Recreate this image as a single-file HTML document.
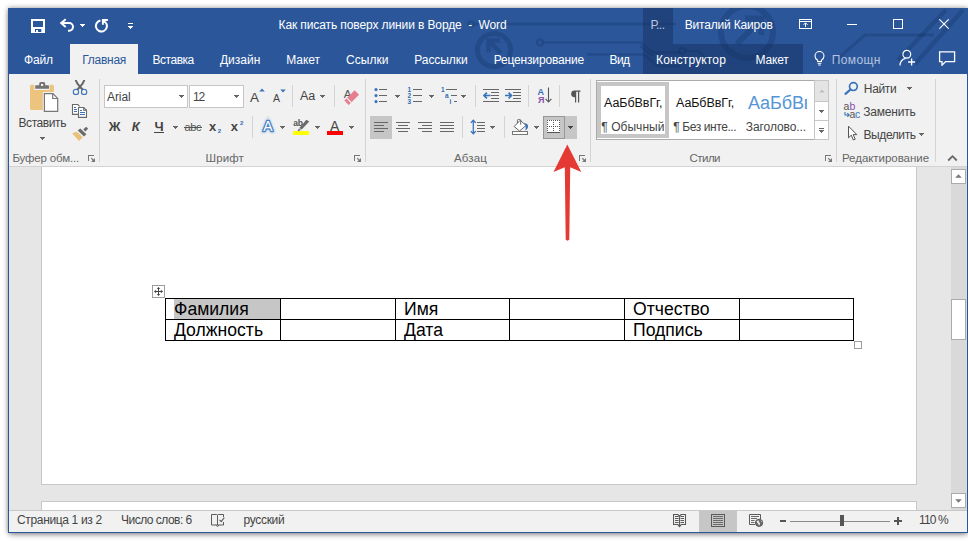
<!DOCTYPE html>
<html><head><meta charset="utf-8"><title>Word</title>
<style>
*{box-sizing:border-box;margin:0;padding:0}
html,body{width:968px;height:541px;overflow:hidden;background:#fff;font-family:"Liberation Sans",sans-serif}
.a{position:absolute;display:block}
.t{position:absolute;white-space:pre;line-height:1;display:block}
</style></head><body>
<div class="a" style="left:8px;top:8px;width:960px;height:525px;box-shadow:0 0 5px rgba(0,0,0,.45),0 4px 6px -2px rgba(0,0,0,.25);background:#2b579a"></div>
<div class="a" style="left:8px;top:8px;width:960px;height:66px;background:#2b579a;"></div>
<svg class="a" style="left:8px;top:8px;" width="960" height="66" viewBox="0 0 960 66"><g fill="none" stroke="#0a2350" stroke-opacity=".23" stroke-width="2.600">
<circle cx="463" cy="16" r="2.500"/><path d="M466 16H668"/>
<circle cx="532" cy="34.500" r="3"/><path d="M535.500 34.500H633L645 44.500H672"/>
<path d="M579 46.500H636L650 58H672"/>
<circle cx="486" cy="42" r="16.500" stroke-width="5"/>
<path d="M493 45L481 33M480.500 44V32.500H492" stroke-width="4.500"/>
<circle cx="739" cy="24" r="26" stroke-width="6"/>
<path d="M729 36L752 12M737 10.500H753.500V27" stroke-width="6"/>
<circle cx="674" cy="43" r="2.800"/><path d="M677 43H690L700 52H716"/>
<path d="M632 38L645 48"/>
<path d="M826 54L857 27H926" stroke-width="3"/><path d="M938 2L890 52" stroke-width="4.500"/><path d="M955 2L907 56" stroke-width="4.500"/>
</g></svg>
<div class="a" style="left:643px;top:8px;width:30px;height:36px;background:rgba(20,45,90,.45);"></div>
<div class="a" style="left:643px;top:44px;width:160px;height:30px;background:rgba(20,45,90,.45);"></div>
<div class="a" style="left:9px;top:74px;width:958px;height:92px;background:#f1f1f1;"></div>
<div class="a" style="left:9px;top:166px;width:958px;height:1px;background:#d2d2d2;"></div>
<div class="a" style="left:70px;top:44px;width:68px;height:30px;background:#f1f1f1;"></div>
<span class="t" style="left:278.50px;top:18px;line-height:14px;font-size:12px;color:#fff;letter-spacing:-0.105px;">Как писать поверх линии в Ворде  -  Word</span>
<span class="t" style="left:650.60px;top:18px;line-height:14px;font-size:12px;color:#b9c6de;letter-spacing:-0.438px;">Р...</span>
<span class="t" style="left:684.70px;top:18px;line-height:14px;font-size:12px;color:#fff;letter-spacing:-0.184px;">Виталий Каиров</span>
<span class="t" style="left:24.00px;top:53px;line-height:14px;font-size:12px;color:#fff;letter-spacing:-0.204px;">Файл</span>
<span class="t" style="left:152.60px;top:53px;line-height:14px;font-size:12px;color:#fff;letter-spacing:-0.487px;">Вставка</span>
<span class="t" style="left:220.00px;top:53px;line-height:14px;font-size:12px;color:#fff;letter-spacing:-0.007px;">Дизайн</span>
<span class="t" style="left:286.20px;top:53px;line-height:14px;font-size:12px;color:#fff;letter-spacing:-0.034px;">Макет</span>
<span class="t" style="left:346.00px;top:53px;line-height:14px;font-size:12px;color:#fff;letter-spacing:0.058px;">Ссылки</span>
<span class="t" style="left:414.20px;top:53px;line-height:14px;font-size:12px;color:#fff;letter-spacing:-0.045px;">Рассылки</span>
<span class="t" style="left:493.70px;top:53px;line-height:14px;font-size:12px;color:#fff;letter-spacing:-0.169px;">Рецензирование</span>
<span class="t" style="left:609.60px;top:53px;line-height:14px;font-size:12px;color:#fff;letter-spacing:-0.640px;">Вид</span>
<span class="t" style="left:656.00px;top:53px;line-height:14px;font-size:12px;color:#fff;letter-spacing:0.143px;">Конструктор</span>
<span class="t" style="left:755.60px;top:53px;line-height:14px;font-size:12px;color:#fff;letter-spacing:-0.174px;">Макет</span>
<span class="t" style="left:82.30px;top:53px;line-height:14px;font-size:12px;color:#2b579a;letter-spacing:-0.284px;">Главная</span>
<span class="t" style="left:831.70px;top:53px;line-height:14px;font-size:12px;color:#b4c3df;letter-spacing:0.394px;">Помощн</span>
<div class="a" style="left:9px;top:167px;width:958px;height:343px;background:#e6e6e6;"></div>
<div class="a" style="left:41px;top:167px;width:876px;height:317.5px;background:#fff;border:1px solid #c8c8c8;border-top:none"></div>
<div class="a" style="left:41px;top:501px;width:876px;height:10px;background:#fff;border:1px solid #c8c8c8;border-bottom:none"></div>
<div class="a" style="left:9px;top:510px;width:958px;height:22px;background:#f1f1f1;"></div>
<div class="a" style="left:9px;top:510px;width:958px;height:1px;background:#c8c8c8;"></div>
<svg class="a" style="left:29px;top:80px;" width="31" height="33" viewBox="0 0 31 33"><rect x="1" y="4.650" width="23.900" height="25.250" rx="1.600" fill="#ecc47e"/>
<rect x="5.300" y="4" width="15.300" height="6" fill="#f1f1f1"/>
<path d="M6.200 8.800V6.100Q6.200 5.200 7.100 5.200H10.200V3.600Q10.200 2.100 11.700 2.100H14.700Q16.200 2.100 16.200 3.600V5.200H19.050Q19.950 5.200 19.950 6.100V8.800Z" fill="#737373"/>
<rect x="12" y="3.850" width="2.200" height="2.150" fill="#f1f1f1"/>
<rect x="13.800" y="12" width="12" height="19" fill="#f1f1f1"/>
<path d="M15.400 13.600H23.900L28.700 18.400V31.300H15.400Z" fill="#fff" stroke="#777" stroke-width="1.200"/>
<path d="M23.700 13.600V18.500H28.700" fill="none" stroke="#777" stroke-width="1.200"/></svg>
<span class="t" style="left:18.50px;top:116px;line-height:14px;font-size:12px;color:#444;letter-spacing:-0.422px;">Вставить</span>
<svg class="a" style="left:40px;top:137px;shape-rendering:crispEdges" width="5" height="3" viewBox="0 0 5 3"><path d="M0 0h5v1h-5zM1 1h3v1h-3zM2 2h1v1h-1z" fill="#666"/></svg>
<svg class="a" style="left:72px;top:80px;" width="17" height="16" viewBox="0 0 17 16"><path d="M3.900 0.500Q5 4 8 6.800L10.300 9.300M12.100 0.500Q11 4 8 6.800L5.700 9.300" fill="none" stroke="#666" stroke-width="2" stroke-linecap="round"/>
<circle cx="3.960" cy="11.900" r="2.650" fill="none" stroke="#3b73b9" stroke-width="1.100"/><circle cx="12.100" cy="11.900" r="2.650" fill="none" stroke="#3b73b9" stroke-width="1.100"/></svg>
<svg class="a" style="left:71px;top:103px;" width="18" height="16" viewBox="0 0 18 16"><path d="M8.600 3.300L6.800 1.500H1.500V11.400H7" fill="#fff" stroke="#6a6a6a" stroke-width="1.100"/>
<path d="M3 4h2v1h-2zM3 6h3v1h-3zM3 8h3v1h-3z" fill="#3b73b9"/>
<path d="M7.500 4.500H12.700L15.500 7.300V14.400H7.500Z" fill="#fff" stroke="#6a6a6a" stroke-width="1.100"/>
<path d="M12.700 4.500V7.300H15.500" fill="none" stroke="#6a6a6a" stroke-width="1.100"/>
<path d="M9 7h2v1h-2zM9 9h5v1h-5zM9 11h5v1h-5z" fill="#3b73b9"/></svg>
<svg class="a" style="left:72px;top:126px;" width="17" height="16" viewBox="0 0 17 16"><path d="M0.070 7.200L4.750 5.800L10.850 11.250L7 14.900Z" fill="#eac17a"/>
<path d="M5.700 4.500L8.300 2.500L14.400 8.200L12 10.400Z" fill="#6a6a6a"/>
<path d="M11.250 3.500L14.100 0.700L16.100 2.500L13.500 5.600Z" fill="#6a6a6a"/></svg>
<span class="t" style="left:12.50px;top:152px;line-height:12px;font-size:11.5px;color:#666;letter-spacing:-0.174px;">Буфер обм...</span>
<svg class="a" style="left:88px;top:155px;" width="8" height="8" viewBox="0 0 8 8"><path d="M0 0h6v1h-6zM0 0h1v6h-1z" fill="#777"/><path d="M7 3V7H3Z" fill="#777"/><path d="M3.200 3.200L5.500 5.500" stroke="#777" stroke-width="1.100"/></svg>
<div class="a" style="left:99px;top:79px;width:1px;height:83px;background:#d4d4d4;"></div>
<div class="a" style="left:104px;top:85px;width:84px;height:23px;background:#fff;border:1px solid #c6c6c6"></div>
<div class="a" style="left:189px;top:85px;width:55px;height:23px;background:#fff;border:1px solid #c6c6c6"></div>
<span class="t" style="left:107.00px;top:90px;line-height:14px;font-size:12px;color:#444;letter-spacing:-0.083px;">Arial</span>
<span class="t" style="left:193.00px;top:90px;line-height:14px;font-size:12px;color:#444;letter-spacing:-1.180px;">12</span>
<svg class="a" style="left:179px;top:95px;shape-rendering:crispEdges" width="5" height="3" viewBox="0 0 5 3"><path d="M0 0h5v1h-5zM1 1h3v1h-3zM2 2h1v1h-1z" fill="#666"/></svg>
<svg class="a" style="left:234px;top:95px;shape-rendering:crispEdges" width="5" height="3" viewBox="0 0 5 3"><path d="M0 0h5v1h-5zM1 1h3v1h-3zM2 2h1v1h-1z" fill="#666"/></svg>
<span class="t" style="left:250.00px;top:90px;line-height:15px;font-size:13.5px;color:#444;letter-spacing:0.384px;">A</span>
<svg class="a" style="left:259px;top:88px;" width="6" height="4" viewBox="0 0 6 4"><path d="M0.200 3.600L3 0.400L5.800 3.600Z" fill="#3b73b9"/></svg>
<span class="t" style="left:273.00px;top:92px;line-height:12px;font-size:10.5px;color:#444;letter-spacing:0.784px;">A</span>
<svg class="a" style="left:280px;top:88.5px;" width="6" height="4" viewBox="0 0 6 4"><path d="M0.200 0.400L3 3.600L5.800 0.400Z" fill="#3b73b9"/></svg>
<div class="a" style="left:292px;top:85px;width:1px;height:22px;background:#d4d4d4;"></div>
<span class="t" style="left:300.00px;top:89px;line-height:14px;font-size:12.5px;color:#444;letter-spacing:-0.148px;">Aa</span>
<svg class="a" style="left:320px;top:95px;shape-rendering:crispEdges" width="5" height="3" viewBox="0 0 5 3"><path d="M0 0h5v1h-5zM1 1h3v1h-3zM2 2h1v1h-1z" fill="#666"/></svg>
<div class="a" style="left:334px;top:85px;width:1px;height:22px;background:#d4d4d4;"></div>
<span class="t" style="left:343.70px;top:88px;line-height:12px;font-size:11.5px;color:#555;letter-spacing:-1.172px;">A</span>
<svg class="a" style="left:343px;top:88px;" width="17" height="17" viewBox="0 0 17 17"><g transform="translate(8.900,9.400) rotate(-45)"><rect x="-7.600" y="-3.100" width="14.600" height="6.200" fill="#e57e8f"/><rect x="-4.700" y="-3.400" width="1.200" height="6.800" fill="#f1f1f1"/></g></svg>
<div class="a" style="left:365px;top:79px;width:1px;height:83px;background:#d4d4d4;"></div>
<span class="t" style="left:108.70px;top:119px;line-height:15px;font-size:13px;color:#444;letter-spacing:1.250px;font-weight:700;">Ж</span>
<span class="t" style="left:131.70px;top:119px;line-height:15px;font-size:13px;color:#444;letter-spacing:0.300px;font-weight:700;font-style:italic;">К</span>
<span class="t" style="left:154.60px;top:119px;line-height:15px;font-size:13px;color:#444;letter-spacing:-0.741px;font-weight:700;">Ч</span>
<div class="a" style="left:154px;top:132px;width:10px;height:1px;background:#444;"></div>
<svg class="a" style="left:173px;top:126px;shape-rendering:crispEdges" width="5" height="3" viewBox="0 0 5 3"><path d="M0 0h5v1h-5zM1 1h3v1h-3zM2 2h1v1h-1z" fill="#666"/></svg>
<span class="t" style="left:184.50px;top:121px;line-height:12px;font-size:11px;color:#555;letter-spacing:-0.417px;">abc</span>
<div class="a" style="left:184px;top:126.5px;width:17.5px;height:1px;background:#555;"></div>
<span class="t" style="left:209.00px;top:119px;line-height:15px;font-size:13px;color:#444;letter-spacing:0.166px;font-weight:700;">x</span>
<span class="t" style="left:217.80px;top:128px;line-height:6px;font-size:6px;color:#2f6bb3;letter-spacing:0.056px;font-weight:700;">2</span>
<span class="t" style="left:230.80px;top:119px;line-height:15px;font-size:13px;color:#444;letter-spacing:0.266px;font-weight:700;">x</span>
<span class="t" style="left:240.00px;top:120px;line-height:6px;font-size:6px;color:#2f6bb3;letter-spacing:0.056px;font-weight:700;">2</span>
<div class="a" style="left:252px;top:116px;width:1px;height:22px;background:#d4d4d4;"></div>
<svg class="a" style="left:257px;top:115px;" width="22" height="22" viewBox="0 0 22 22"><defs><filter id="gl" x="-30%" y="-30%" width="160%" height="160%"><feGaussianBlur stdDeviation="0.900"/></filter></defs><text x="10.900" y="16.200" text-anchor="middle" font-family="Liberation Sans" font-size="14" fill="none" stroke="#6fa3dc" stroke-width="3.600" filter="url(#gl)" opacity=".45">A</text><text x="10.900" y="16.200" text-anchor="middle" font-family="Liberation Sans" font-size="14" fill="#fff" stroke="#4580c6" stroke-width="2.600" stroke-linejoin="round" paint-order="stroke">A</text></svg>
<svg class="a" style="left:280px;top:126px;shape-rendering:crispEdges" width="5" height="3" viewBox="0 0 5 3"><path d="M0 0h5v1h-5zM1 1h3v1h-3zM2 2h1v1h-1z" fill="#666"/></svg>
<span class="t" style="left:293.20px;top:118px;line-height:10px;font-size:8.5px;color:#555;letter-spacing:-0.261px;font-weight:700;">ab</span>
<svg class="a" style="left:296px;top:119px;" width="14" height="13" viewBox="0 0 14 13"><path d="M10.300 0.700L13.300 2.600L5.700 10.600L3.300 9.100Z" fill="#6a6a6a"/><path d="M3 9.600L5 10.900L1.300 12.500Z" fill="#6a6a6a"/></svg>
<div class="a" style="left:293px;top:131px;width:16px;height:4px;background:#ffff00;"></div>
<svg class="a" style="left:315px;top:126px;shape-rendering:crispEdges" width="5" height="3" viewBox="0 0 5 3"><path d="M0 0h5v1h-5zM1 1h3v1h-3zM2 2h1v1h-1z" fill="#666"/></svg>
<span class="t" style="left:330.00px;top:118px;line-height:16px;font-size:14px;color:#4a4a4a;letter-spacing:0.856px;">A</span>
<div class="a" style="left:327px;top:131px;width:16px;height:4px;background:#ff0000;"></div>
<svg class="a" style="left:349px;top:126px;shape-rendering:crispEdges" width="5" height="3" viewBox="0 0 5 3"><path d="M0 0h5v1h-5zM1 1h3v1h-3zM2 2h1v1h-1z" fill="#666"/></svg>
<span class="t" style="left:205.50px;top:152px;line-height:12px;font-size:11.5px;color:#666;letter-spacing:0.131px;">Шрифт</span>
<svg class="a" style="left:354px;top:155px;" width="8" height="8" viewBox="0 0 8 8"><path d="M0 0h6v1h-6zM0 0h1v6h-1z" fill="#777"/><path d="M7 3V7H3Z" fill="#777"/><path d="M3.200 3.200L5.500 5.500" stroke="#777" stroke-width="1.100"/></svg>
<svg class="a" style="left:373.5px;top:88px;" width="4" height="3.5" viewBox="0 0 4 3.5"><circle cx="2" cy="1.600" r="1.550" fill="#3b73b9"/></svg>
<div class="a" style="left:379px;top:89px;width:8px;height:1px;background:#666;"></div>
<svg class="a" style="left:373.5px;top:94px;" width="4" height="3.5" viewBox="0 0 4 3.5"><circle cx="2" cy="1.600" r="1.550" fill="#3b73b9"/></svg>
<div class="a" style="left:379px;top:95px;width:8px;height:1px;background:#666;"></div>
<svg class="a" style="left:373.5px;top:100px;" width="4" height="3.5" viewBox="0 0 4 3.5"><circle cx="2" cy="1.600" r="1.550" fill="#3b73b9"/></svg>
<div class="a" style="left:379px;top:101px;width:8px;height:1px;background:#666;"></div>
<svg class="a" style="left:395px;top:95px;shape-rendering:crispEdges" width="5" height="3" viewBox="0 0 5 3"><path d="M0 0h5v1h-5zM1 1h3v1h-3zM2 2h1v1h-1z" fill="#666"/></svg>
<span class="t" style="left:407.60px;top:86px;line-height:7px;font-size:6.5px;color:#2f6bb3;letter-spacing:0.175px;font-weight:700;">1</span>
<div class="a" style="left:413px;top:89px;width:9px;height:1px;background:#666;"></div>
<span class="t" style="left:407.60px;top:92px;line-height:7px;font-size:6.5px;color:#2f6bb3;letter-spacing:0.175px;font-weight:700;">2</span>
<div class="a" style="left:413px;top:95px;width:9px;height:1px;background:#666;"></div>
<span class="t" style="left:407.60px;top:98px;line-height:7px;font-size:6.5px;color:#2f6bb3;letter-spacing:0.175px;font-weight:700;">3</span>
<div class="a" style="left:413px;top:101px;width:9px;height:1px;background:#666;"></div>
<svg class="a" style="left:429px;top:95px;shape-rendering:crispEdges" width="5" height="3" viewBox="0 0 5 3"><path d="M0 0h5v1h-5zM1 1h3v1h-3zM2 2h1v1h-1z" fill="#666"/></svg>
<span class="t" style="left:441.00px;top:86px;line-height:7px;font-size:6.5px;color:#2f6bb3;letter-spacing:-0.125px;font-weight:700;">1</span>
<div class="a" style="left:446px;top:89px;width:11px;height:1px;background:#666;"></div>
<span class="t" style="left:445.00px;top:92px;line-height:7px;font-size:6.5px;color:#2f6bb3;letter-spacing:-0.625px;font-weight:700;">a</span>
<div class="a" style="left:451px;top:95px;width:6px;height:1px;background:#666;"></div>
<span class="t" style="left:449.50px;top:98px;line-height:7px;font-size:6.5px;color:#2f6bb3;letter-spacing:0.188px;font-weight:700;">i</span>
<div class="a" style="left:454px;top:101px;width:3px;height:1px;background:#666;"></div>
<svg class="a" style="left:461px;top:95px;shape-rendering:crispEdges" width="5" height="3" viewBox="0 0 5 3"><path d="M0 0h5v1h-5zM1 1h3v1h-3zM2 2h1v1h-1z" fill="#666"/></svg>
<div class="a" style="left:475px;top:85px;width:1px;height:22px;background:#d4d4d4;"></div>
<div class="a" style="left:483px;top:89px;width:16px;height:1px;background:#666;"></div>
<div class="a" style="left:483px;top:101px;width:16px;height:1px;background:#666;"></div>
<div class="a" style="left:491px;top:92px;width:8px;height:1px;background:#666;"></div>
<div class="a" style="left:491px;top:95px;width:8px;height:1px;background:#666;"></div>
<div class="a" style="left:491px;top:98px;width:8px;height:1px;background:#666;"></div>
<svg class="a" style="left:483px;top:92px;" width="8" height="7" viewBox="0 0 8 7"><path d="M7.500 3.500H1.200M3.900 0.600L1 3.500L3.900 6.400" fill="none" stroke="#3b73b9" stroke-width="1.700"/></svg>
<div class="a" style="left:505px;top:89px;width:16px;height:1px;background:#666;"></div>
<div class="a" style="left:505px;top:101px;width:16px;height:1px;background:#666;"></div>
<div class="a" style="left:513px;top:92px;width:8px;height:1px;background:#666;"></div>
<div class="a" style="left:513px;top:95px;width:8px;height:1px;background:#666;"></div>
<div class="a" style="left:513px;top:98px;width:8px;height:1px;background:#666;"></div>
<svg class="a" style="left:505px;top:92px;" width="8" height="7" viewBox="0 0 8 7"><path d="M0 3.500H6.300M3.600 0.600L6.500 3.500L3.600 6.400" fill="none" stroke="#3b73b9" stroke-width="1.700"/></svg>
<div class="a" style="left:528px;top:85px;width:1px;height:22px;background:#d4d4d4;"></div>
<span class="t" style="left:537.60px;top:87px;line-height:10px;font-size:9px;color:#3b73b9;letter-spacing:0.500px;font-weight:700;">А</span>
<span class="t" style="left:538.00px;top:95px;line-height:10px;font-size:9px;color:#8a4fa8;letter-spacing:-0.069px;font-weight:700;">Я</span>
<svg class="a" style="left:545px;top:87px;" width="7" height="16" viewBox="0 0 7 16"><path d="M3.500 0.500V15M0.600 11.800L3.500 15L6.400 11.800" fill="none" stroke="#555" stroke-width="1.100"/></svg>
<div class="a" style="left:559px;top:85px;width:1px;height:22px;background:#d4d4d4;"></div>
<svg class="a" style="left:569.5px;top:89.5px;" width="11" height="13" viewBox="0 0 11 13"><path d="M4.500 0.500H10.500V1.700H9.200V12.500H8V1.700H6.200V12.500H5V7.200H4.500A3.350 3.350 0 0 1 4.500 0.500Z" fill="#555"/></svg>
<div class="a" style="left:370px;top:116px;width:22px;height:23px;background:#c6c6c6;"></div>
<div class="a" style="left:374px;top:122px;width:14px;height:1px;background:#666;"></div>
<div class="a" style="left:374px;top:125px;width:10px;height:1px;background:#666;"></div>
<div class="a" style="left:374px;top:128px;width:14px;height:1px;background:#666;"></div>
<div class="a" style="left:374px;top:131px;width:10px;height:1px;background:#666;"></div>
<div class="a" style="left:396.0px;top:122px;width:14.0px;height:1px;background:#666;"></div>
<div class="a" style="left:398.25px;top:125px;width:9.5px;height:1px;background:#666;"></div>
<div class="a" style="left:396.0px;top:128px;width:14.0px;height:1px;background:#666;"></div>
<div class="a" style="left:398.25px;top:131px;width:9.5px;height:1px;background:#666;"></div>
<div class="a" style="left:418px;top:122px;width:14px;height:1px;background:#666;"></div>
<div class="a" style="left:422px;top:125px;width:10px;height:1px;background:#666;"></div>
<div class="a" style="left:418px;top:128px;width:14px;height:1px;background:#666;"></div>
<div class="a" style="left:422px;top:131px;width:10px;height:1px;background:#666;"></div>
<div class="a" style="left:440px;top:122px;width:14px;height:1px;background:#666;"></div>
<div class="a" style="left:440px;top:125px;width:14px;height:1px;background:#666;"></div>
<div class="a" style="left:440px;top:128px;width:14px;height:1px;background:#666;"></div>
<div class="a" style="left:440px;top:131px;width:14px;height:1px;background:#666;"></div>
<div class="a" style="left:462px;top:116px;width:1px;height:22px;background:#d4d4d4;"></div>
<svg class="a" style="left:470px;top:119px;" width="7" height="16" viewBox="0 0 7 16"><path d="M3.300 1.200V14.800M0.800 3.900L3.300 1.200L5.800 3.900M0.800 12.100L3.300 14.800L5.800 12.100" fill="none" stroke="#3b73b9" stroke-width="1.300"/></svg>
<div class="a" style="left:477px;top:122px;width:8px;height:1px;background:#666;"></div>
<div class="a" style="left:477px;top:125px;width:8px;height:1px;background:#666;"></div>
<div class="a" style="left:477px;top:128px;width:8px;height:1px;background:#666;"></div>
<div class="a" style="left:477px;top:131px;width:8px;height:1px;background:#666;"></div>
<svg class="a" style="left:490px;top:126px;shape-rendering:crispEdges" width="5" height="3" viewBox="0 0 5 3"><path d="M0 0h5v1h-5zM1 1h3v1h-3zM2 2h1v1h-1z" fill="#666"/></svg>
<div class="a" style="left:504px;top:116px;width:1px;height:22px;background:#d4d4d4;"></div>
<svg class="a" style="left:511px;top:118px;" width="19" height="18" viewBox="0 0 19 18"><path d="M13.100 4.900Q17.600 5.400 17 9.200Q16.400 11.600 14.300 12.400Q14.900 10 14.600 8.600Z" fill="#3b73b9"/>
<rect x="1.500" y="13.500" width="15" height="3" fill="#fff" stroke="#777"/>
<path d="M9.260 2.250L15 7.500L8.500 13L3.150 8.500Z" fill="#fff" stroke="#666" stroke-width="1"/>
<path d="M6.400 5.100V2.500Q6.400 1.500 7.400 1.500H8.700Q9.700 1.500 9.700 2.500V6.600" fill="none" stroke="#666" stroke-width="1"/></svg>
<svg class="a" style="left:534px;top:126px;shape-rendering:crispEdges" width="5" height="3" viewBox="0 0 5 3"><path d="M0 0h5v1h-5zM1 1h3v1h-3zM2 2h1v1h-1z" fill="#666"/></svg>
<div class="a" style="left:543px;top:116px;width:34px;height:23px;background:#c6c6c6;"></div>
<div class="a" style="left:543px;top:116px;width:22px;height:23px;background:#c6c6c6;border:1px solid #979797"></div>
<svg class="a" style="left:547px;top:120px;shape-rendering:crispEdges" width="13" height="13" viewBox="0 0 13 13"><rect x="0" y="0" width="13" height="13" fill="#fff"/><path d="M0 0h1v1h-1zM0 2h1v1h-1zM0 4h1v1h-1zM0 6h1v1h-1zM0 8h1v1h-1zM0 10h1v1h-1zM2 0h1v1h-1zM2 6h1v1h-1zM4 0h1v1h-1zM4 6h1v1h-1zM6 0h1v1h-1zM6 2h1v1h-1zM6 4h1v1h-1zM6 6h1v1h-1zM6 8h1v1h-1zM6 10h1v1h-1zM8 0h1v1h-1zM8 6h1v1h-1zM10 0h1v1h-1zM10 6h1v1h-1zM12 0h1v1h-1zM12 2h1v1h-1zM12 4h1v1h-1zM12 6h1v1h-1zM12 8h1v1h-1zM12 10h1v1h-1z" fill="#555"/><rect x="0" y="12" width="13" height="1" fill="#555"/></svg>
<svg class="a" style="left:568px;top:126px;shape-rendering:crispEdges" width="5" height="3" viewBox="0 0 5 3"><path d="M0 0h5v1h-5zM1 1h3v1h-3zM2 2h1v1h-1z" fill="#444"/></svg>
<span class="t" style="left:454.00px;top:152px;line-height:12px;font-size:11.5px;color:#666;letter-spacing:0.147px;">Абзац</span>
<svg class="a" style="left:579px;top:155px;" width="8" height="8" viewBox="0 0 8 8"><path d="M0 0h6v1h-6zM0 0h1v6h-1z" fill="#777"/><path d="M7 3V7H3Z" fill="#777"/><path d="M3.200 3.200L5.500 5.500" stroke="#777" stroke-width="1.100"/></svg>
<div class="a" style="left:590px;top:79px;width:1px;height:83px;background:#d4d4d4;"></div>
<div class="a" style="left:596px;top:80px;width:233px;height:60px;background:#fff;border:1px solid #ababab"></div>
<div class="a" style="left:597px;top:82px;width:72px;height:56px;background:#fff;border:4px solid #c6c6c6"></div>
<span class="t" style="left:604.00px;top:96px;line-height:14px;font-size:12.5px;color:#111;letter-spacing:-0.061px;">АаБбВвГг,</span>
<span class="t" style="left:601.30px;top:120px;line-height:14px;font-size:12px;color:#444;letter-spacing:0.041px;">¶ Обычный</span>
<span class="t" style="left:676.00px;top:96px;line-height:14px;font-size:12.5px;color:#111;letter-spacing:-0.094px;">АаБбВвГг,</span>
<span class="t" style="left:673.30px;top:120px;line-height:14px;font-size:12px;color:#444;letter-spacing:-0.414px;">¶ Без инте...</span>
<div class="a" style="left:746px;top:90px;width:60.500px;height:24px;overflow:hidden"><span class="t" style="left:2px;top:3.600px;font-size:18px;color:#5595d6;letter-spacing:-0.100px">АаБбВв</span></div>
<span class="t" style="left:745.80px;top:120px;line-height:14px;font-size:12px;color:#444;letter-spacing:-0.088px;">Заголово...</span>
<div class="a" style="left:814px;top:80px;width:15px;height:60px;background:#fff;border:1px solid #c6c6c6"></div>
<div class="a" style="left:815px;top:81px;width:13px;height:20px;background:#e4e4e4;"></div>
<div class="a" style="left:814px;top:101px;width:15px;height:1px;background:#c6c6c6;"></div>
<div class="a" style="left:814px;top:120px;width:15px;height:1px;background:#c6c6c6;"></div>
<svg class="a" style="left:818.5px;top:89px;" width="6" height="4" viewBox="0 0 6 4"><path d="M0.300 3.400L3 0.500L5.700 3.400Z" fill="#bdbdbd"/></svg>
<svg class="a" style="left:819px;top:110px;shape-rendering:crispEdges" width="5" height="3" viewBox="0 0 5 3"><path d="M0 0h5v1h-5zM1 1h3v1h-3zM2 2h1v1h-1z" fill="#666"/></svg>
<div class="a" style="left:819px;top:128px;width:5px;height:1px;background:#666;"></div>
<svg class="a" style="left:819px;top:130px;shape-rendering:crispEdges" width="5" height="3" viewBox="0 0 5 3"><path d="M0 0h5v1h-5zM1 1h3v1h-3zM2 2h1v1h-1z" fill="#666"/></svg>
<span class="t" style="left:689.50px;top:152px;line-height:12px;font-size:11.5px;color:#666;letter-spacing:-0.528px;">Стили</span>
<svg class="a" style="left:825px;top:155px;" width="8" height="8" viewBox="0 0 8 8"><path d="M0 0h6v1h-6zM0 0h1v6h-1z" fill="#777"/><path d="M7 3V7H3Z" fill="#777"/><path d="M3.200 3.200L5.500 5.500" stroke="#777" stroke-width="1.100"/></svg>
<div class="a" style="left:836px;top:79px;width:1px;height:83px;background:#d4d4d4;"></div>
<svg class="a" style="left:844px;top:81px;" width="15" height="14" viewBox="0 0 15 14"><circle cx="9.400" cy="5.600" r="3.900" fill="none" stroke="#3b73b9" stroke-width="1.700"/><path d="M6.500 8.500L1.500 12.800" stroke="#3b73b9" stroke-width="2.200" stroke-linecap="round"/></svg>
<span class="t" style="left:863.80px;top:82px;line-height:14px;font-size:12px;color:#444;letter-spacing:-0.330px;">Найти</span>
<svg class="a" style="left:907px;top:87px;shape-rendering:crispEdges" width="5" height="3" viewBox="0 0 5 3"><path d="M0 0h5v1h-5zM1 1h3v1h-3zM2 2h1v1h-1z" fill="#666"/></svg>
<span class="t" style="left:843.60px;top:100px;line-height:12px;font-size:10.5px;color:#555;letter-spacing:-0.044px;">a</span>
<span class="t" style="left:849.60px;top:100px;line-height:12px;font-size:10.5px;color:#8a4fa8;letter-spacing:0.256px;">b</span>
<span class="t" style="left:849.40px;top:108px;line-height:12px;font-size:10.5px;color:#555;letter-spacing:-0.244px;">a</span>
<span class="t" style="left:855.00px;top:108px;line-height:12px;font-size:10.5px;color:#3b73b9;letter-spacing:-0.250px;">c</span>
<svg class="a" style="left:843.5px;top:112px;" width="6" height="5" viewBox="0 0 6 5"><path d="M1 0V3H5M3.300 1.200L5.200 3L3.300 4.800" fill="none" stroke="#3b73b9" stroke-width="1.100"/></svg>
<span class="t" style="left:863.20px;top:105px;line-height:14px;font-size:12px;color:#444;letter-spacing:-0.192px;">Заменить</span>
<svg class="a" style="left:847px;top:125px;" width="11" height="17" viewBox="0 0 11 17"><path d="M1.500 1.200V12.800L4.300 10.200L6.300 15L8.200 14.200L6.200 9.600H9.800Z" fill="#fff" stroke="#555" stroke-width="1"/></svg>
<span class="t" style="left:863.50px;top:128px;line-height:14px;font-size:12px;color:#444;letter-spacing:-0.407px;">Выделить</span>
<svg class="a" style="left:919px;top:133px;shape-rendering:crispEdges" width="5" height="3" viewBox="0 0 5 3"><path d="M0 0h5v1h-5zM1 1h3v1h-3zM2 2h1v1h-1z" fill="#666"/></svg>
<span class="t" style="left:842.00px;top:152px;line-height:12px;font-size:11.5px;color:#666;letter-spacing:-0.044px;">Редактирование</span>
<div class="a" style="left:935px;top:79px;width:1px;height:83px;background:#d4d4d4;"></div>
<svg class="a" style="left:947px;top:154px;" width="11" height="8" viewBox="0 0 11 8"><path d="M1.200 6.500L5.500 2.200L9.800 6.500" fill="none" stroke="#666" stroke-width="1.800"/></svg>
<div class="a" style="left:174px;top:299px;width:105.5px;height:20px;background:#c6c6c6;"></div>
<div class="a" style="left:165px;top:298px;width:689px;height:1px;background:#000;"></div>
<div class="a" style="left:165px;top:319px;width:689px;height:1px;background:#000;"></div>
<div class="a" style="left:165px;top:340px;width:689px;height:1px;background:#000;"></div>
<div class="a" style="left:165px;top:298px;width:1px;height:43px;background:#000;"></div>
<div class="a" style="left:280px;top:298px;width:1px;height:43px;background:#000;"></div>
<div class="a" style="left:395px;top:298px;width:1px;height:43px;background:#000;"></div>
<div class="a" style="left:509px;top:298px;width:1px;height:43px;background:#000;"></div>
<div class="a" style="left:624px;top:298px;width:1px;height:43px;background:#000;"></div>
<div class="a" style="left:739px;top:298px;width:1px;height:43px;background:#000;"></div>
<div class="a" style="left:853px;top:298px;width:1px;height:43px;background:#000;"></div>
<span class="t" style="left:174.00px;top:299px;line-height:20px;font-size:17.6px;color:#000;">Фамилия</span>
<span class="t" style="left:174.00px;top:320px;line-height:20px;font-size:17.6px;color:#000;">Должность</span>
<span class="t" style="left:404.00px;top:299px;line-height:20px;font-size:17.6px;color:#000;">Имя</span>
<span class="t" style="left:404.00px;top:320px;line-height:20px;font-size:17.6px;color:#000;">Дата</span>
<span class="t" style="left:633.00px;top:299px;line-height:20px;font-size:17.6px;color:#000;">Отчество</span>
<span class="t" style="left:633.00px;top:320px;line-height:20px;font-size:17.6px;color:#000;">Подпись</span>
<div class="a" style="left:152px;top:285px;width:13px;height:13px;background:#fff;border:1px solid #9d9d9d"></div>
<svg class="a" style="left:154px;top:287px;" width="9" height="9" viewBox="0 0 9 9"><path d="M4.500 0.800V8.200M0.800 4.500H8.200" stroke="#444" stroke-width="1" fill="none"/><path d="M4.500 0L6.200 2.100H2.800ZM4.500 9L6.200 6.900H2.800ZM0 4.500L2.100 2.800V6.200ZM9 4.500L6.900 2.800V6.200Z" fill="#444"/></svg>
<div class="a" style="left:854px;top:341px;width:8px;height:8px;background:#fff;border:1px solid #9d9d9d"></div>
<svg class="a" style="left:550px;top:142px;" width="36" height="102" viewBox="0 0 36 102"><path d="M17.300 2.500L31.300 30L20.200 25.200L19.300 97.500Q17.500 99.800 15.700 97.500L14.800 25.200L3.500 30Z" fill="#e53a33"/></svg>
<div class="a" style="left:951px;top:167px;width:16px;height:343px;background:#d9d9d9;"></div>
<div class="a" style="left:951px;top:169px;width:15px;height:15px;background:#fff;border:1px solid #ababab"></div>
<svg class="a" style="left:955px;top:174px;" width="7" height="4" viewBox="0 0 7 4"><path d="M0.200 3.800L3.500 0.300L6.800 3.800Z" fill="#777"/></svg>
<div class="a" style="left:951px;top:493px;width:15px;height:15px;background:#fff;border:1px solid #ababab"></div>
<svg class="a" style="left:955px;top:499px;" width="7" height="4" viewBox="0 0 7 4"><path d="M0.200 0.200L3.500 3.700L6.800 0.200Z" fill="#777"/></svg>
<div class="a" style="left:951px;top:299px;width:15px;height:41px;background:#fff;border:1px solid #ababab"></div>
<span class="t" style="left:17.00px;top:513px;line-height:14px;font-size:12px;color:#444;letter-spacing:-0.344px;">Страница 1 из 2</span>
<span class="t" style="left:121.00px;top:513px;line-height:14px;font-size:12px;color:#444;letter-spacing:-0.513px;">Число слов: 6</span>
<span class="t" style="left:243.60px;top:513px;line-height:14px;font-size:12px;color:#444;letter-spacing:-0.337px;">русский</span>
<span class="t" style="left:919.00px;top:513px;line-height:14px;font-size:12px;color:#444;letter-spacing:-0.868px;">110 %</span>
<div class="a" style="left:699px;top:511px;width:38px;height:21px;background:#c6c6c6;"></div>
<div class="a" style="left:780px;top:520px;width:6px;height:2px;background:#555;"></div>
<div class="a" style="left:790px;top:520.5px;width:100px;height:1px;background:#8a8a8a;"></div>
<div class="a" style="left:840px;top:515px;width:4px;height:11px;background:#555;"></div>
<div class="a" style="left:894px;top:520px;width:8px;height:2px;background:#555;"></div>
<div class="a" style="left:897px;top:517px;width:2px;height:8px;background:#555;"></div>
<div class="a" style="left:8px;top:74px;width:1px;height:459px;background:#2b579a;"></div>
<div class="a" style="left:966.5px;top:74px;width:1.5px;height:459px;background:#2b579a;"></div>
<div class="a" style="left:8px;top:532px;width:960px;height:1px;background:#2b579a;"></div>
<svg class="a" style="left:31px;top:19px;" width="14" height="14" viewBox="0 0 14 14"><path d="M0 0H14V2H0ZM0 0H2V14H0ZM12 0H14V14H12ZM0 8H14V10H0ZM0 10H4V14H0ZM10.300 10H14V14H10.300ZM0 13H14V14H0ZM5 11H7V13.500H5Z" fill="#fff"/></svg>
<svg class="a" style="left:59px;top:18px;" width="16" height="15" viewBox="0 0 16 15"><path d="M6.700 1.200L2.200 5.100L6.700 9" fill="none" stroke="#fff" stroke-width="2"/><path d="M2.400 5.100H10.200A3.800 3.800 0 0 1 10.200 12.700H9" fill="none" stroke="#fff" stroke-width="2"/></svg>
<svg class="a" style="left:80px;top:24px;shape-rendering:crispEdges" width="5" height="3" viewBox="0 0 5 3"><path d="M0 0h5v1h-5zM1 1h3v1h-3zM2 2h1v1h-1z" fill="#fff"/></svg>
<svg class="a" style="left:94px;top:18px;" width="16" height="15" viewBox="0 0 16 15"><path d="M6.450 2.580A5.500 5.500 0 1 0 12.160 5.250" fill="none" stroke="#fff" stroke-width="2"/><path d="M13.900 2.050H8.900V6.700M8.900 2.050L12.300 5.400" fill="none" stroke="#fff" stroke-width="1.900"/><path d="M7.950 1.100H11.500L7.950 4.600Z" fill="#fff"/></svg>
<div class="a" style="left:128px;top:23px;width:5px;height:1px;background:#fff;"></div>
<svg class="a" style="left:128px;top:26px;shape-rendering:crispEdges" width="5" height="3" viewBox="0 0 5 3"><path d="M0 0h5v1h-5zM1 1h3v1h-3zM2 2h1v1h-1z" fill="#fff"/></svg>
<svg class="a" style="left:799px;top:19px;" width="13" height="10" viewBox="0 0 13 10"><rect x="0.500" y="0.500" width="12" height="9" fill="none" stroke="#fff"/><path d="M0.500 2.500H12.500" stroke="#fff"/><path d="M6.500 8V4M4.500 5.800L6.500 3.800L8.500 5.800" fill="none" stroke="#fff"/></svg>
<div class="a" style="left:847px;top:24px;width:10px;height:1px;background:#fff;"></div>
<div class="a" style="left:893px;top:19px;width:10px;height:10px;background:transparent;border:1px solid #fff"></div>
<svg class="a" style="left:939px;top:19px;" width="10" height="10" viewBox="0 0 10 10"><path d="M0.300 0.300L9.700 9.700M9.700 0.300L0.300 9.700" stroke="#fff" stroke-width="1.100"/></svg>
<svg class="a" style="left:814px;top:51px;" width="11" height="15" viewBox="0 0 11 15"><path d="M3.600 10.500V9.300Q1 7.600 1 5A4.500 4.500 0 0 1 10 5Q10 7.600 7.400 9.300V10.500Z" fill="none" stroke="#fff" stroke-width="1.100"/><path d="M3.600 12.300H7.400M4.200 14H6.800" stroke="#fff" stroke-width="1"/></svg>
<svg class="a" style="left:899px;top:49px;" width="17" height="17" viewBox="0 0 17 17"><circle cx="7.800" cy="5.300" r="3.900" fill="none" stroke="#fff" stroke-width="1.200"/><path d="M1 16.500Q1.300 10.600 6.600 9.400" fill="none" stroke="#fff" stroke-width="1.200"/><path d="M12.600 9.500V16.500M9.100 13H16.100" stroke="#fff" stroke-width="1.300"/></svg>
<svg class="a" style="left:938px;top:51px;" width="18" height="15" viewBox="0 0 18 15"><path d="M1.600 0.800H16.600V10.600H7.600L4 14.200V10.600H1.600Z" fill="none" stroke="#fff" stroke-width="1.300"/></svg>
<svg class="a" style="left:211px;top:514px;" width="14" height="13" viewBox="0 0 14 13"><path d="M6.500 1.500V11M6.500 11H0.500V0.500H5.500Q6.500 0.500 6.500 1.500Q6.500 0.500 7.500 0.500H12.500V3M12.500 8V11H6.500" fill="none" stroke="#5a5a5a" stroke-width="1"/><path d="M4.800 11L6.500 12.600L8.200 11" fill="none" stroke="#5a5a5a"/><path d="M8.500 5.800L10.200 7.600L13.300 3.600" fill="none" stroke="#5a5a5a" stroke-width="1.100"/></svg>
<svg class="a" style="left:673px;top:514px;" width="14" height="14" viewBox="0 0 14 14"><path d="M5 0.500H0.500V10.500H5M8 0.500H12.500V10.500H8" fill="none" stroke="#5a5a5a" stroke-width="1.100"/><path d="M6.500 1.500V12M4.600 10.300L6.500 12.600L8.400 10.300M4.800 0.500L6.500 2.200L8.200 0.500" fill="none" stroke="#5a5a5a" stroke-width="1.100"/><path d="M2 2h3.500v1h-3.500zM2 4h3.500v1h-3.500zM2 6h3.500v1h-3.500zM2 8h3.500v1h-3.500zM7.500 2h3.500v1h-3.500zM7.500 4h3.500v1h-3.500zM7.500 6h3.500v1h-3.500zM7.500 8h3.500v1h-3.500z" fill="#5a5a5a"/></svg>
<svg class="a" style="left:711px;top:514px;" width="14" height="13" viewBox="0 0 14 13"><rect x="0.500" y="0.500" width="13" height="12" fill="none" stroke="#5a5a5a"/><path d="M2 2h10v1h-10zM2 4h10v1h-10zM2 6h10v1h-10zM2 8h10v1h-10zM2 10h10v1h-10z" fill="#6a6a6a"/></svg>
<svg class="a" style="left:748px;top:514px;" width="16" height="14" viewBox="0 0 16 14"><path d="M12.500 5V0.500H1.500V10.500H7" fill="none" stroke="#5a5a5a"/><path d="M3 2h8v1h-8zM3 4h6v1h-6zM3 6h3.500v1h-3.500zM3 8h3.500v1h-3.500z" fill="#6a6a6a"/><circle cx="11.050" cy="8.800" r="3.600" fill="#6a6a6a" stroke="#5a5a5a" stroke-width="1"/><path d="M8.600 7.200Q9.800 6.200 10.800 6.600Q10.400 8 11.500 8.600Q12.500 9.500 11.500 11.500Q10 10.500 10 9.300Q8.800 8.700 8.600 7.200ZM12.600 6.300Q13.800 7.200 14 8.500Q13 8 12.600 6.300Z" fill="#f1f1f1"/></svg>
</body></html>
